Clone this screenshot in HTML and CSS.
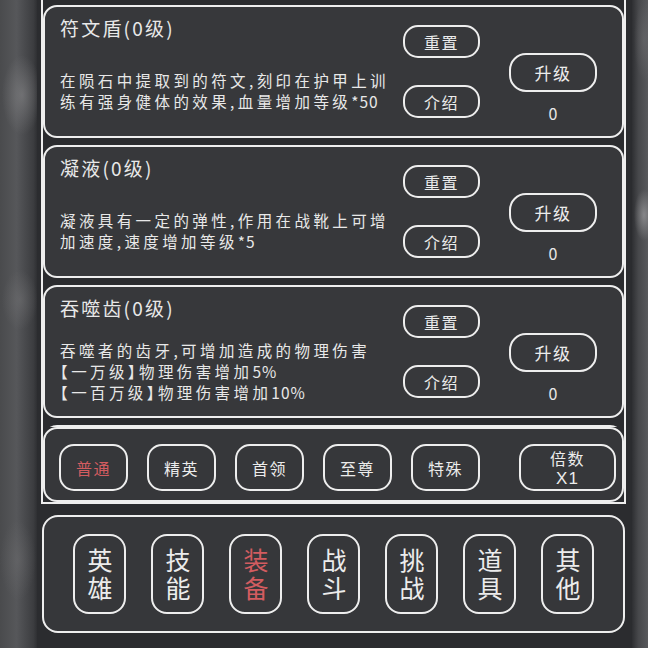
FILE: index.html
```html
<!DOCTYPE html>
<html lang="zh-CN">
<head>
<meta charset="utf-8">
<title>装备</title>
<link rel="stylesheet" href="styles.css">
</head>
<body>
<div class="screen">
  <div class="blur blur-left"></div>
  <main class="panel">
    <section class="board">
      <div class="list">
        <article class="card">
          <div class="info">
            <h2 class="title">符文盾(0级)</h2>
            <p class="desc"><span>在陨石中提取到的符文,刻印在护甲上训<br>练有强身健体的效果,血量增加等级<span class="num">*50</span></span></p>
          </div>
          <div class="actions">
            <button class="btn small">重置</button>
            <button class="btn small">介绍</button>
          </div>
          <div class="upgrade">
            <button class="btn big">升级</button>
            <span class="count">0</span>
          </div>
        </article>
        <article class="card">
          <div class="info">
            <h2 class="title">凝液(0级)</h2>
            <p class="desc"><span>凝液具有一定的弹性,作用在战靴上可增<br>加速度,速度增加等级<span class="num">*5</span></span></p>
          </div>
          <div class="actions">
            <button class="btn small">重置</button>
            <button class="btn small">介绍</button>
          </div>
          <div class="upgrade">
            <button class="btn big">升级</button>
            <span class="count">0</span>
          </div>
        </article>
        <article class="card">
          <div class="info">
            <h2 class="title">吞噬齿(0级)</h2>
            <p class="desc"><span>吞噬者的齿牙,可增加造成的物理伤害<br>【一万级】物理伤害增加<span class="num">5%</span><br>【一百万级】物理伤害增加<span class="num">10%</span></span></p>
          </div>
          <div class="actions">
            <button class="btn small">重置</button>
            <button class="btn small">介绍</button>
          </div>
          <div class="upgrade">
            <button class="btn big">升级</button>
            <span class="count">0</span>
          </div>
        </article>
        <article class="card"></article>
      </div>
      <div class="filters">
        <button class="btn chip active">普通</button>
        <button class="btn chip">精英</button>
        <button class="btn chip">首领</button>
        <button class="btn chip">至尊</button>
        <button class="btn chip">特殊</button>
        <button class="btn chip multi"><span class="multi-label">倍数</span><span class="multi-value">X1</span></button>
      </div>
    </section>
    <nav class="tabs">
      <button class="btn tab"><span class="tab-label">英雄</span></button>
      <button class="btn tab"><span class="tab-label">技能</span></button>
      <button class="btn tab active"><span class="tab-label">装备</span></button>
      <button class="btn tab"><span class="tab-label">战斗</span></button>
      <button class="btn tab"><span class="tab-label">挑战</span></button>
      <button class="btn tab"><span class="tab-label">道具</span></button>
      <button class="btn tab"><span class="tab-label">其他</span></button>
    </nav>
  </main>
  <div class="blur blur-right"></div>
</div>
</body>
</html>
```

FILE: styles.css
```css
* {
  box-sizing: border-box;
}

html, body {
  margin: 0;
  padding: 0;
  width: 648px;
  height: 648px;
  overflow: hidden;
  background: #4c4d4f;
  font-family: "Noto Sans CJK SC", "Noto Sans", sans-serif;
  color: #e8e8e8;
}

.screen {
  display: flex;
  width: 648px;
  height: 648px;
}

/* soft backdrop on both sides of the game panel */
.blur {
  flex: none;
  height: 648px;
}

.blur-left {
  width: 37px;
  background:
    radial-gradient(ellipse 20px 40px at 22px 95px, rgba(140, 140, 142, 0.55), transparent),
    radial-gradient(ellipse 18px 30px at 20px 300px, rgba(120, 120, 122, 0.45), transparent),
    radial-gradient(ellipse 18px 40px at 18px 560px, rgba(115, 115, 117, 0.4), transparent),
    linear-gradient(90deg, #4a4b4d 0%, #56575a 45%, #3c3d40 90%, #2f3033 100%);
}

.blur-right {
  width: 16px;
  background:
    radial-gradient(ellipse 10px 26px at 12px 215px, rgba(170, 170, 172, 0.6), transparent),
    radial-gradient(ellipse 10px 40px at 12px 40px, rgba(120, 120, 122, 0.4), transparent),
    linear-gradient(90deg, #2e2f32 0%, #47484b 40%, #58595c 100%);
}

.panel {
  flex: none;
  width: 595px;
  height: 648px;
  background: #2b2c2f;
  display: flex;
  flex-direction: column;
  padding-left: 4px;
}

.board {
  width: 585px;
  border-left: 2px solid #eeeeee;
  border-right: 2px solid #eeeeee;
  border-bottom: 2px solid #eeeeee;
}

.list {
  height: 427px;
  overflow: hidden;
  display: flex;
  flex-direction: column;
  gap: 7px;
  padding-top: 5px;
}

.card {
  flex: none;
  height: 133px;
  border: 2px solid #eeeeee;
  border-radius: 14px;
  background: #37383b;
  display: flex;
  padding-left: 15px;
  padding-right: 25px;
}

.info {
  flex: 1;
  display: flex;
  flex-direction: column;
  padding-top: 8px;
  min-width: 0;
}

.title {
  margin: 0 0 12px;
  font-size: 19px;
  font-weight: normal;
  line-height: 26px;
  letter-spacing: 2.2px;
  white-space: nowrap;
}

.desc {
  flex: 1;
  margin: 0;
  padding-bottom: 7px;
  display: flex;
  align-items: center;
  font-size: 15.5px;
  line-height: 21px;
  letter-spacing: 3.4px;
  white-space: nowrap;
  font-feature-settings: "halt";
}

.num {
  letter-spacing: 1px;
}

.btn {
  font-family: inherit;
  color: #ececec;
  background: transparent;
  border: 2px solid #eeeeee;
  padding: 0;
  display: flex;
  align-items: center;
  justify-content: center;
  text-align: center;
}

.actions {
  flex: none;
  width: 77px;
  margin-left: 8px;
  padding-top: 18px;
  display: flex;
  flex-direction: column;
  gap: 27px;
}

.small {
  width: 77px;
  height: 33px;
  border-radius: 15px;
  font-size: 16px;
  letter-spacing: 1.5px;
}

.upgrade {
  flex: none;
  width: 88px;
  margin-left: 29px;
  padding-top: 46px;
  display: flex;
  flex-direction: column;
  align-items: center;
}

.big {
  width: 88px;
  height: 39px;
  border-radius: 17px;
  font-size: 17px;
  letter-spacing: 1.5px;
}

.count {
  margin-top: 12px;
  font-size: 16px;
  line-height: 18px;
}

.filters {
  height: 75px;
  border: 2px solid #eeeeee;
  border-radius: 14px;
  background: #36373a;
  display: flex;
  align-items: flex-start;
  gap: 19px;
  padding: 15px 6px 0 14px;
}

.chip {
  width: 69px;
  height: 47px;
  border-radius: 15px;
  font-size: 16px;
  letter-spacing: 1.5px;
}

.chip.active {
  color: #d25c60;
}

.chip.multi {
  width: 97px;
  margin-left: auto;
  flex-direction: column;
}

.multi-label {
  line-height: 22px;
}

.multi-value {
  font-family: "Liberation Sans", sans-serif;
  font-size: 17px;
  line-height: 20px;
  letter-spacing: 1px;
}

.tabs {
  margin: 11px 0 0 1px;
  width: 583px;
  height: 118px;
  border: 2px solid #eeeeee;
  border-radius: 16px;
  background: #36373a;
  display: flex;
  justify-content: center;
  align-items: center;
  gap: 25px;
}

.tab {
  width: 53px;
  height: 80px;
  border-radius: 16px;
}

/* two stacked characters set as one vertical line */
.tab-label {
  writing-mode: vertical-rl;
  text-orientation: upright;
  font-size: 25px;
  letter-spacing: 3px;
  line-height: 1;
  margin-top: 4px;
}

.tab.active {
  color: #d25c60;
}
```
